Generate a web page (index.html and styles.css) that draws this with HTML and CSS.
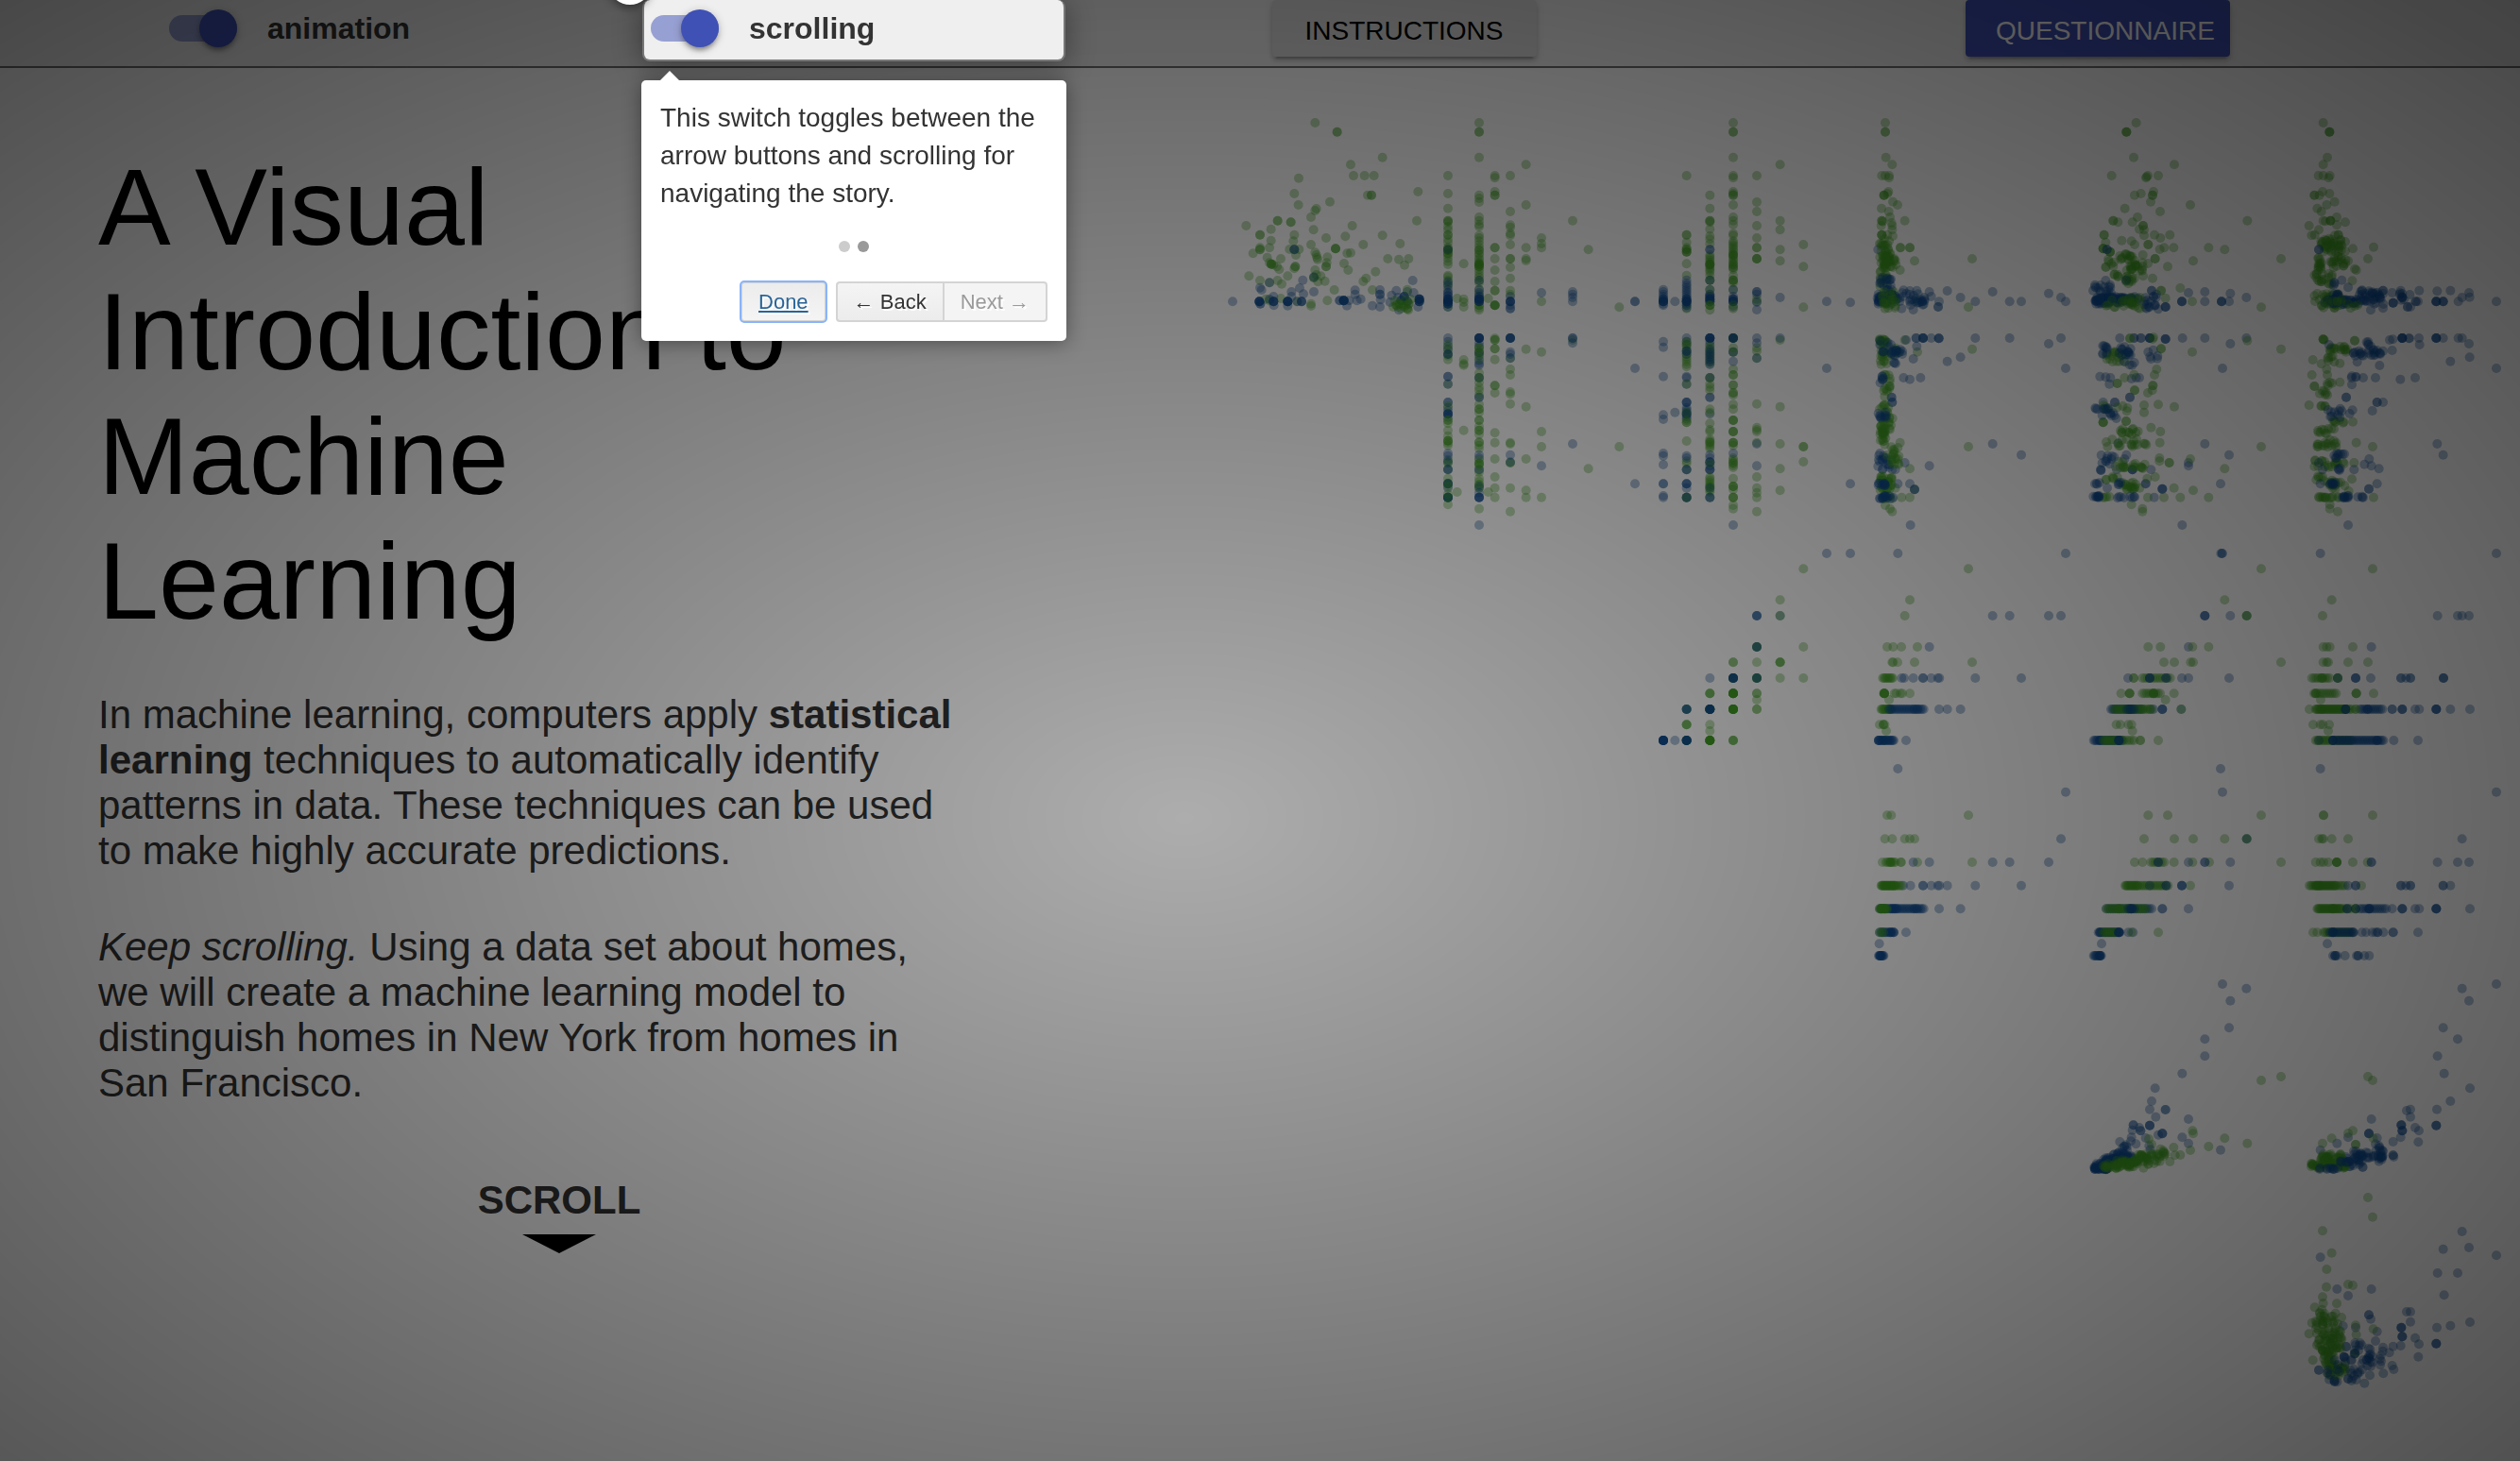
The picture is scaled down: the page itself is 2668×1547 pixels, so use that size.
FILE: index.html
```html
<!DOCTYPE html>
<html lang="en">
<head>
<meta charset="utf-8">
<meta name="viewport" content="width=device-width, initial-scale=1">
<title>A Visual Introduction to Machine Learning</title>
<link rel="stylesheet" href="styles.css">
</head>
<body>
<header class="toolbar">
  <div class="toolbar-cell toolbar-cell-first">
    <label class="switch"><input type="checkbox" class="switch-input" checked><span class="switch-text">animation</span></label>
  </div>
  <div class="toolbar-cell toolbar-cell-active">
    <span class="step-badge" aria-hidden="true"></span>
    <label class="switch"><input type="checkbox" class="switch-input" checked><span class="switch-text">scrolling</span></label>
    <div class="tour" role="dialog" aria-label="Tour">
      <p class="tour-text">This switch toggles between the arrow buttons and scrolling for navigating the story.</p>
      <div class="tour-dots"><span class="dot"></span><span class="dot dot-on"></span></div>
      <div class="tour-actions">
        <button type="button" class="tour-button tour-done">Done</button>
        <div class="tour-pair"><button type="button" class="tour-button tour-back">← Back</button><button type="button" class="tour-button tour-next" disabled>Next →</button></div>
      </div>
    </div>
  </div>
  <div class="toolbar-cell toolbar-cell-button"><button type="button" class="raised">INSTRUCTIONS</button></div>
  <div class="toolbar-cell toolbar-cell-button"><button type="button" class="raised raised-primary">QUESTIONNAIRE</button></div>
</header>
<main class="story">
  <section class="intro">
    <h1 class="title">A Visual Introduction to Machine Learning</h1>
    <p class="copy">In machine learning, computers apply <strong>statistical learning</strong> techniques to automatically identify patterns in data. These techniques can be used to make highly accurate predictions.</p>
    <p class="copy"><em>Keep scrolling.</em> Using a data set about homes, we will create a machine learning model to distinguish homes in New York from homes in San Francisco.</p>
    <div class="scroll-hint">SCROLL
      <svg class="scroll-arrow" viewBox="0 0 78 28" aria-hidden="true"><path d="M0 0H78L39 20Z"/></svg>
    </div>
  </section>
  <svg class="matrix" id="matrix" viewBox="0 0 4134 4200" role="img" aria-label="Scatterplot matrix of homes"></svg>
</main>
<div class="overlay"></div>
<script src="matrix.js"></script>
</body>
</html>
```
FILE: styles.css
```css
* { box-sizing: border-box; }

body {
  margin: 0;
  min-height: 100vh;
  background: #fff;
  color: #333;
  font-family: "Liberation Sans", Arial, sans-serif;
  overflow: hidden;
}

button { font-family: inherit; }

.toolbar {
  display: grid;
  grid-template-columns: 680fr 448fr 717fr 752fr 71fr;
  height: 72px;
  background: #efefef;
  border-bottom: 2px solid #707070;
}

.toolbar-cell { height: 60px; display: flex; align-items: center; }
.toolbar-cell-first { padding-left: 179px; }
.toolbar-cell-button { justify-content: center; align-items: flex-start; }

.toolbar-cell-active {
  position: relative;
  z-index: 20;
  padding-left: 7px;
  height: 65px;
  padding-bottom: 3px;
  background: #efefef;
  border: 2px solid #777;
  border-top: 0;
  border-radius: 8px;
  box-shadow: 0 4px 30px rgba(0, 0, 0, .4);
}

.switch { display: flex; align-items: center; gap: 32px; cursor: pointer; }
.switch-text { font-size: 32px; line-height: 48px; font-weight: 700; }

.switch-input {
  appearance: none;
  position: relative;
  width: 72px;
  height: 28px;
  margin: 0;
  border-radius: 14px;
  background: rgba(63, 81, 181, .5);
}

.switch-input::after {
  content: "";
  position: absolute;
  right: 0;
  top: -6px;
  width: 40px;
  height: 40px;
  border-radius: 50%;
  background: #3f51b5;
  box-shadow: 0 4px 4px rgba(0, 0, 0, .14), 0 6px 4px -4px rgba(0, 0, 0, .2), 0 2px 10px rgba(0, 0, 0, .24);
}

.step-badge {
  position: absolute;
  z-index: -1;
  left: -38px;
  top: -41px;
  width: 46px;
  height: 46px;
  border: 5px solid #fff;
  border-radius: 50%;
  background: #999;
  box-shadow: 0 4px 10px rgba(0, 0, 0, .4);
}

.raised {
  width: 280px;
  height: 60px;
  padding: 6px 32px 0;
  border: 0;
  border-radius: 4px;
  background: #dcdcdc;
  color: #000;
  font-size: 28px;
  white-space: nowrap;
  box-shadow: 0 4px 4px rgba(0, 0, 0, .14), 0 6px 2px -4px rgba(0, 0, 0, .2), 0 2px 10px rgba(0, 0, 0, .12);
}

.raised-primary { background: #3f51b5; color: #fff; }

.tour {
  position: absolute;
  left: -3px;
  top: 85px;
  width: 450px;
  padding: 20px;
  border-radius: 5px;
  background: #fff;
  box-shadow: 0 2px 20px rgba(0, 0, 0, .4);
}

.tour::before {
  content: "";
  position: absolute;
  left: 20px;
  top: -10px;
  border: 10px solid transparent;
  border-top: 0;
  border-bottom-color: #fff;
}

.tour-text { margin: 0; font-size: 28px; line-height: 40px; }
.tour-dots { display: flex; justify-content: center; gap: 8px; padding: 30px 0 31px; }
.dot { width: 12px; height: 12px; border-radius: 50%; background: #ccc; }
.dot-on { background: #999; }
.tour-actions { display: flex; justify-content: flex-end; gap: 10px; }
.tour-pair { display: flex; }

.tour-button {
  height: 43px;
  padding: 0 17px;
  border: 2px solid #d4d4d4;
  border-radius: 4px;
  background: linear-gradient(#f4f4f4, #ececec);
  color: #333;
  font-size: 22px;
  text-shadow: 2px 2px 0 #fff;
}

.tour-done {
  background: linear-gradient(#ececec, #f4f4f4);
  color: #2a6496;
  text-decoration: underline;
  outline: 2px solid #8ab4f8;
  outline-offset: -1px;
}

.tour-back { border-radius: 4px 0 0 4px; border-right: 0; }
.tour-next { border-radius: 0 4px 4px 0; background: #f4f4f4; color: #9a9a9a; }

.story {
  display: grid;
  grid-template-columns: 1290fr 1378fr;
  align-items: start;
  padding-top: 38px;
}

.intro { padding: 43px 270px 0 104px; }

.title {
  margin: 0 180px 52px 0;
  color: #000;
  font-size: 115px;
  line-height: 132px;
  font-weight: 400;
}

.copy { margin: 0 0 54px; font-size: 42px; line-height: 48px; }
.scroll-hint { margin-left: 60px; padding-top: 22px; text-align: center; font-size: 42px; line-height: 48px; font-weight: 700; }
.scroll-arrow { display: block; width: 78px; height: 28px; margin: 12px auto 0; fill: #000; }

.matrix { width: 100%; display: block; }
.sf { fill: #3f9720; fill-opacity: .34; }
.ny { fill: #104a8c; fill-opacity: .34; }

.overlay {
  position: fixed;
  inset: 0;
  z-index: 10;
  background: radial-gradient(ellipse farthest-corner at 47% 56%, rgba(0, 0, 0, .32), rgba(0, 0, 0, .72));
  pointer-events: none;
}
```
FILE: matrix.js
```js
// Homes plotted in pairs of variables. Each line: series (g = San Francisco, b = New York),
// kind (v = shared x, h = shared y, s = single points, c = dense clusters), then values.
// "@" moves the origin of the following lines; "n*k" repeats; "a-b/step" is a run.
const data = `
@0,0
g s 307,60 377,89*2 521,170 420,193 429,228 464,228 494,228 255,236 241,285 474,290 486,290*2 634,279 354,311 254,321 311,333 307,339 294,360 188,371*2 230,376*2 630,371 88,387 302,400 425,387 167,398 132,416*2 241,416 342,426 403,421 521,418 167,434 238,436 294,447 460,447 577,444 132,457 132,463*2 162,457 226,462 241,462 256,462 372,460*3 110,475 246,480 307,472 311,480 313,488 409,475 420,473 155,488 198,492 346,487 538,492 573,494 604,492 591,512
g s 162,505 168,509*3 175,511 344,505 342,517*2 315,494 399,507 412,528 186,517 193,526 244,517*2 241,523 307,528 97,547 220,547 311,543 325,547 303,552*2 499,533 469,554 460,564 132,561 188,561 201,572 316,565 338,563 368,591 489,591 162,568 162,625 150,620 198,618 250,628 346,625 294,635 294,642
b s 45,628 241,463*2 162,568 268,560 303,550 617,561 132,584 137,591 130,628*5 133,635*2 175,612 175,628*4 176,640 162,620 220,628*6 220,641 232,597 232,612 258,585 270,604 303,597 264,628*3 250,628 385,625*2 398,625*6 408,641 415,625 434,592 434,605 440,625 452,620 489,641 513,591 513,605*2 515,622 513,645 565,593 550,608 600,597 590,612*3 580,625*2 573,655 620,600 638,620*5 638,628*4 634,645 600,628*2 570,615 545,630
g s 555,645 565,640*2 575,635*2 585,640 590,625 600,650*2 605,635*2 600,590 560,625 580,650 610,620 595,640 570,645 590,645 603,655
g v729 228 285 332 371*2 376 390 400 416*2 430 440 455 460 465*3 475*2 480 490 500 510 545 550 560 570 580 645
b v729 463 565 575 590 600*2 610*2 620*4 628*5 635*4 645
g v779 508 620 630 645 813 826 830 1037
g v758 618 1233
g v857 618 1233
g v828 60 89*2 170 290 300 312 360 371 383 390 418 426 436 447 457 465*2 475 480 490 495 505*2 510*3 517*3 526 535 545 552 561 568 590 605 640*2 648 655
b v828 561 590 600 612*2 620*5 628*4
g v878 228 235 279 290*2 457*2 492 528 564 593*2 640*4 745 750*2 778*2 812 895*2 918 1045 1076 1128 1185 1220 1250
g v927 228 342 385 392 412 418 447 492*2 519 554 593 605 808 843 861 915 922 953 1076 1080 1140*2 1220 1295
b v927 612 628*4 640 650*2 744*5 788 795 808 1115 1138
g v977 193 321 457 492 498 779 962 1128 1228 1250
g v1026 426 444 457 628 788 1041 1089 1250
b v1026 600 1150
g v1125 371 750
b v1125 597 605 615 628 744*2 760 1080
g v1175 463 1159
g v1273 646 1089
b v1323 628*2 840 1207
b v729 744 755 770 780
g v729 765 780 795 800 812 890
b v729 795*2 866*2 890 948*2 965 975 985*4 995
g v729 960 1005*2 1015 1037 1055 1070*3 1078 1085 1130 1140*2 1160 1190
b v729 1110 1118 1135 1162*2 1207*4 1220 1250*6
g v729 1205 1215 1240 1250 1273
b v828 744*6 760 770 790*2 800 815 825 830 870*2 932*2
g v828 775*2 785 795 810 855 870 885 900 910 925 955 970*2 980 1005*2 1025 1037*2 1050 1075*2 1085 1095
b v828 1115 1125 1162*2
g v828 1130 1142*3 1150 1170 1190 1200 1210*2 1220*2
b v828 1215 1235 1250*4 1338
g v828 1286
@1350,0
b v63 590 597 605 612 620*3 628*5 635 640 755 773 866 988 1002 1110 1118 1146 1207*2 1245 1250
b v100 628 980
g v137 228 416*2 440 457 463*2 470*3 508 545 640 650
b v137 560 570-650/7 620*2 628*4
g v211 290 332 371*2 376 398 420 430 445 480-535/6 510*3 545 560*2
b v211 463*2 560 590 605*2 612*3 620*4 628*3
g v211 590 640*3 655
g v285 60 89*2 170 228 235 279 285 290*2 321 360 371 383 412 418 436-530/6 480*2 510 520 545 560*3 568 590
b v285 590 612 620*3 628*4 645
g v285 640 650
g v360 228 312 342 387 426 457*2 492*3 620 628 775 785 808 953 1028 1035 1041 1076 1185 1220 1235 1250 1295
b v360 597*2 605 630 654 744 760 808 1080 1150
g v434 193 371 400 463 499 750 962 1080 1159 1228
b v434 615 744
g v508 447 517 646 1089*2 1137
b v582 628 840
b v657 631 1207
b v137 744 755 765
g v137 755-835/8
b v137 785*2 795 866 870 890 948*3 965-1000/7 985*2
g v137 890 980 1005 1012*2 1071 1135 1142 1162
b v137 1118 1125 1162*2 1207*3 1220 1250*4
g v137 1250
b v211 744*6 755 765
g v211 770-830/7
b v211 780-835/8 870*2 932*2 985
g v211 870 890 900 910 970 980 1015 1035 1041 1065-1095/6 1075
b v211 1115 1125 1138*3 1150 1162*3
g v211 1142 1185-1235/6 1215 1250
b v211 1220 1250*2
g v285 744*3
b v285 744*4 788*2 818
g v285 775 788 843 861*2 893*2 918*2 925 955 970 1005*3 1041*3 1076*3 1085 1125-1160/6 1140 1190 1215*3 1225 1250*3 1275 1286
b v285 1110 1338
g s 768,60 768,89*2 770,170 790,193 757,228 768,228 780,228 780,235 778,279 775,285 764,290*3 792,311 807,321 756,332 779,342 783,360 757,371*2 760,374 830,371 788,378 790,387 755,387 790,400 757,416*3 775,416 792,420 765,430 780,436 750,444 765,450 816,457*2 846,457*2 861,499 1044,492 815,528 1032,646 868,625
b s 745,463
g c 750,440,775,580,34 765,460,785,520,14 760,480,805,520,16
b s 1287,602 1326,615 1341,628 965,594 1109,597 1007,615 1054,628 1163,628 1200,628 908,597 914,612 826,592 846,594 868,593 939,628 936,645*2 857,654 820,650 885,628*3 862,628 846,628
b c 745,550,790,580,12 742,605,800,635,50 750,590,790,610,8 790,600,900,640,28
g c 755,590,800,650,20
g s 830,750 870,788 1044,779 815,1076 1032,1089 846,1159 861,1225 846,1250 820,1250 768,1275 783,1286 790,1295 800,1220
b s 866,744*2 888,744*4 914,744 938,745*3 1054,744 1163,744 1326,744 1287,762 1341,840 965,818 1007,805 857,810 868,770 834,750 826,870 846,875 880,870 908,1150 1109,1080 1200,1115 848,1338 830,1140 808,1207 846,1207 861,1225*2 790,1162 800,1162 788,932*2 790,948*2
g c 750,745,775,830,30 780,770,805,800,8 755,850,785,930,14 750,955,795,1015,16
b c 750,750,790,790,8 785,780,825,800,14 795,815,805,830,3 752,860,770,895,6 742,980,780,1000,10 745,1108,790,1165,18
g c 750,1020,772,1085,24 780,1020,795,1045,3 770,1090,815,1150,18 750,1180,790,1230,26 750,1245,800,1255,6
b c 745,1203,772,1212,10 750,1245,798,1255,14
@1350,1350
b h78 582 657 808 1341
g h127 508 1032
g h226 434 846
b h276 360*3 434 1109 1163 1287 1326
g h276 434 830
g h375 360*3 508 774 793 819 870
b h375 360*2 908
g h424 285*2 360 434*3 790 793 807 861 1044
g h474 285*4 360*4 434 508 760-795/4
b h474 211 285*5 360*2 820 828 857 888*2 914 935 940 1054 1200
g h523 211*3 285*9 360*2 763 765*5 797 803 816 822 846
g h543 360 780
g h573 137*2 211*6 285*9 360*2 755-790/3
b h573 137*3 211*6 780-890/5 860 870 939 965 1007
g h622 137*3 211 750 762*2 766
g h642 211 771
g h672 137*4 211*9 285*3 760 765
b h672 63*9 100 137*6 747-795/3 747*3 834
b h762 808
b h836 1341
g h910 774 787 1032
g h985 767 790 830 846 861
b h985 1326
g h1059 759 770-800/5 785*2 818*2 870 1044
b h1059 857 908 1109 1163 1287
b h1133 825 848 888*2 914 935 940 965 1054 1200
g h1133 755-800/2 800-820/5
b h1207 750-890/5 785-805/4 860 868 939 1007
g h1207 750-775/3 755*3 765*2
b h1282 750-796/4 785*2 795*2 834
g h1282 750 757 762
b h1318 749
b h1356 747-763/2 752*2
@2700,0
g s 215,60 184,89*3 207,170 336,193 137,228 285,228 252,228 246,235 248,232 230,285 210,290 270,279 267,290*2 261,311 387,321 179,332 291,342 219,360 142,371*2 157,376 203,376 568,371 237,387*2 225,398 240,400 240,418 113,416*2 273,416 322,416 292,426 169,434 200,436 210,447 253,447*2 118,440 304,457 334,457 445,457 290,462 496,463 675,492 396,499 315,517 267,554 237,547 236,480 110,460*3 132,470*3 275,492*2 355,585 294,593*2 612,646 308,617 393,628
g c 115,480,150,520,7 160,470,210,500,14 180,500,255,530,20 145,535,160,550,5 180,545,210,575,12
b s 122,463*2 118,561 95,585 78,593 183,560 381,600 433,597 514,602 565,615 433,628 360,628*3 486,628*3 510,628 308,645*3 285,652 255,645 264,593*2 270,612*2
b c 80,575,140,615,18 85,615,130,635,40 130,610,220,635,50 240,600,285,650,14
g c 120,615,230,650,24
b s 362,744 433,744 565,744 514,762 308,747*3 258,744*4 230,744*2 208,744*2 163,744 489,840 100,866 118,868 130,890 133,870 200,873 215,870 225,870 195,932*2 110,948 147,948*2 433,1080 510,1115 381,1140 381,1150 361,1338 262,1162 483,1207 298,1223*3 272,1250 123,1220 158,1078 178,1128 184,1115 245,1207*2 203,1162*3 153,1162
g s 568,752 675,779 393,788 294,778*2 280,843 273,861 268,895*2 266,910 252,918 285,955 240,957 240,980 336,962 262,1028 292,1041 290,1076 612,1089 496,1159 387,1128 289,1125 289,1135 320,1140*2 335,1220 396,1228 355,1250 303,1250 445,1250 200,1273 235,1286 235,1295 275,1185 250,1190 252,1250 110,1012*3 183,1008*2 195,745*2 178,870 155,888*2 210,910*2 208,860
g c 120,780,185,820,18 150,960,190,980,4 145,1030,225,1050,12 115,1065,250,1090,18 140,1135,250,1160,18 115,1185,155,1195,6 170,1200,240,1225,18 105,1248,140,1252,4 260,740,270,750,2 110,955,130,980,5
b c 105,750,130,795,9 160,770,205,800,14 250,780,285,815,6 150,815,215,830,4 85,965,155,1000,15 95,1105,145,1145,10 95,1160,105,1165,3 80,1203,100,1210,4 158,1203,168,1210,4 78,1243,100,1252,10 155,1248,210,1252,8
g s 809,60 829,89*3 822,170 809,193 794,228 809,228 830,228 826,235 807,279 797,290 781,290*2 829,285 845,311 820,321 790,332 803,342 852,360 809,371 816,373 832,371*3 879,376 764,387 852,385 795,400 772,418 782,416 857,416*2 846,418 828,428 903,460 969,455 951,492 888,499 909,524 914,528 901,562
g c 795,430,880,475,38 785,485,800,495,3 790,500,805,530,10 830,485,880,520,18 780,540,845,575,18 775,600,870,650,36
b s 795,463*2 868,560 888,583 1114,593 1171,595 1213,593 1272,600 1274,614 1250,615 1238,628 1359,628 1168,628*4 1190,628*3 1103,628*2 1110,628 1077,645*2 1086,645 999,649 960,655 1031,632*3 1060,615*3 1028,600 1055,593 999,593
b c 830,565,850,580,3 840,600,860,630,14 790,622,870,635,14 870,620,920,640,26 920,590,1000,640,40 1040,595,1095,632,7
g c 800,620,920,650,12
g s 809,748*3 812,750 909,752*2 776,813 862,824 803,826 820,843 773,861 822,861 862,884 781,897*2 764,957 914,1076 966,1089 969,1250 903,1010 830,1273 830,1286 855,1295 900,1192 907,1140 890,1230
g c 830,770,885,790,16 820,800,845,820,6 820,880,840,895,4 785,910,825,925,6 800,955,815,965,4 820,1000,880,1015,7 785,1030,850,1048,10 785,1065,850,1090,16 780,1130,880,1155,18 785,1180,815,1200,6 820,1195,880,1225,14 780,1248,865,1252,13
b s 1060,744*5 1082,745*2 1113,744 1115,765 1168,744*4 1190,744 1238,744 1250,744 1272,762 1274,805 1213,818 1359,840 988,831 1054,875 1101,870 975,870 936,870 900,892 882,932*2 980,948*2 999,948 965,975 1171,1080 1190,1115 980,1207 954,1223*2 986,1159 888,1338 907,1162 955,1128 940,1145 962,1150 1028,783 1020,750 1030,748 827,765 917,820 800,1207 795,1140 807,1162
b c 905,780,1000,800,24 945,755,965,775,5 893,865,915,870,4 820,965,910,1000,12 840,1105,880,1125,9 850,1155,865,1168,4 830,1203,850,1210,8 870,1245,890,1253,10 915,1245,940,1252,4
@2700,1350
b h78 484 488*2 800 1359
g h127 612 966
g h226 496 836
b h276 433*3 514 566 1172 1236 1250 1272
g h276 566*2 807
b h375 381 962
g h375 253 292 394 445 809 820 830 903
g h424 303 336 388 396 675 809 820 825 888 951
g h474 207*2 235-325/8 773 780-830/7 805*2 855*3
b h474 189 258*3 310*2 360 381 510 855 912*3 960 1056*2 1072 1086*2 1191*3
g h523 167 194*3 235-295/7 270*3 335 780-850/7 785*2 914*3 969
g h543 308 801
b h573 135-235/5 195*3 260 270 298*3 358 805 880*2 925-1000/6 950*2 1028*2 1060*3 1101 1114 1168*4 1213 1275
g h573 145-270/6 358 765 785-875/3 875-900/6 912*2
b h573 185-210/6 880*3
g h622 152 165 190 200 777 800 808 828
g h642 203 825
b h672 80-175/4 100*2
g h672 110-150/5 160-210/8 228*2 285 785-900/5
b h672 160*4 795 840*4 850-1000/5 980*2 1033 1110
b h762 483 800
b h836 489 1359
g h910 253 315 612 810*2 966
g h985 240 336 396 496 566*2 795 805 809 836 888
b h985 566 1250
g h1059 210 235 262-310/7 335 394 447 675 785 800 810 825 852*4 903 950
b h1059 285*2 381 433*2 514 962*2 1172 1236 1272
g h1133 180-220/3 220-320/6 387 765-800/5 785-850/3 850-880/7 930
b h1133 258 310*2 360*3 510 888 912*2 1056*2 1072 1086*2 1190*2 1213
b h1207 120-200/7 215-270/7 298*2 381
g h1207 120-250/6 160*2 790-870/3 875-900/7 840*2 912*3
b h1207 190-212/5 200*2 885*2 912 925-1010/7 955*3 1028 1060*3 1101 1114 1168*4 1275
b h1282 95-165/4 100*2 190 205
g h1282 110-150/5 200 285 777 790 810-900/5
b h1282 160*4 830-905/6 840*3 905*2 932 945 965 975 982*2 1000 1031*2 1110
b h1318 105 822
b h1356 80-105/3 100*3 840 847*3 853 878 915 920*2 940 955
@2700,2730
b s 489,66 565,80 514,119 510,205 433,241 433,295 361,350 275,397 264,438 258,464 277,488 308,465*2 258,515*3 381,495 298,541*3 285,545 206,514*2 225,522 229,532*2 203,530 245,555 361,553 381,572 483,593 163,567 200,553 214,574 198,565 256,580 260,592
b c 80,647,125,655,36 85,635,125,655,14 110,615,160,640,36 140,600,205,620,26 170,575,190,595,6
g s 612,372 675,360 394,532 396,541 496,556 568,572 445,582 387,594 334,585 355,609 322,630 338,610 255,558 264,575 238,650 292,590
g c 110,637,160,652,18 150,625,220,650,40 210,605,290,640,34 285,595,310,615,8
b s 1250,80 1359,66 1272,119 1190,205 1236,241 1172,295 1193,350 1275,397 1213,438 1086,464 1074,468 1086,488 1170,464 1168,515*3 1057,514*3 1060,532*3 1101,522 1113,532 962,495 954,541*3 1111,568 1055,553 1031,567 853,572 888,553 980,555 975,574 1031,610*2 800,593 1033,615
g s 951,360 966,372 903,532 888,540 836,556 807,572 912,576*2 968,556
b c 985,578,1002,630,8 905,595,1000,620,30 870,610,940,650,26
g c 765,635,880,650,36 800,605,870,640,44
b c 795,650,860,656,10 850,625,890,640,6
b s 1250,852 1272,903 1190,908 1359,928 1172,984 1236,984 1193,1054 1074,1107 1086,1107 1086,1139 1170,1157 1213,1151 1275,1140 1168,1208*3 1057,1157*3 1060,1186*3 1101,1190 1113,1210 1055,1215 1111,1250 962,1035 954,1117*2 960,1130 800,934 853,1035 888,1056 872,1152 912,1157 980,1170 975,1200 1031,1217 1019,1237 999,1220 998,1232 1028,1278 1033,1290 1000,1303 940,1334 882,1218*2 875,1250*3 795,1292*2 845,1328*3 853,1330 888,1320*2
g s 951,744 966,806 807,850 836,920 820,972 819,1028 888,1020 903,1023 807,1060 852,1081 809,1080 782,1093 805,1100 867,1125 773,1142 764,1177 776,1261 912,1150 914,1180 968,1162 910,1240*2
g c 795,1105,850,1130,10 778,1135,855,1165,18 785,1165,870,1225,48 805,1225,845,1285,26 820,1270,880,1310,26
b c 905,1205,960,1245,12 930,1245,995,1295,18 895,1290,960,1328,10 820,1290,855,1325,6 840,1250,900,1300,8
`;

const svg = document.getElementById("matrix");
let ox = 0, oy = 0, seed = 7;

function random() {
  seed = (seed * 1103515245 + 12345) % 2147483648;
  return seed / 2147483648;
}

function plot(series, x, y) {
  const dot = document.createElementNS("http://www.w3.org/2000/svg", "circle");
  dot.setAttribute("class", series === "g" ? "sf" : "ny");
  dot.setAttribute("cx", Math.round(ox + x));
  dot.setAttribute("cy", Math.round(oy + y));
  dot.setAttribute("r", 15);
  svg.appendChild(dot);
}

for (const line of data.trim().split("\n")) {
  if (line[0] === "@") {
    [ox, oy] = line.slice(1).split(",").map(Number);
    continue;
  }
  const [series, ...rest] = line.split(" ");
  const kind = rest[0];
  const fixed = Number(kind.slice(1));
  for (const value of rest.slice(1)) {
    if (kind === "c") {
      const [x0, y0, x1, y1, n] = value.split(",").map(Number);
      for (let i = 0; i < n; i++) plot(series, x0 + random() * (x1 - x0), y0 + random() * (y1 - y0));
      continue;
    }
    const [at, times = "1"] = value.split("*");
    for (let i = 0; i < Number(times); i++) {
      if (kind === "s") {
        const [x, y] = at.split(",").map(Number);
        plot(series, x, y);
        continue;
      }
      const [from, to, step] = at.split(/[-/]/).map(Number);
      for (let p = from; p <= (to || from); p += step || 1) {
        if (kind[0] === "v") plot(series, fixed, p);
        else plot(series, p, fixed);
      }
    }
  }
}
```
